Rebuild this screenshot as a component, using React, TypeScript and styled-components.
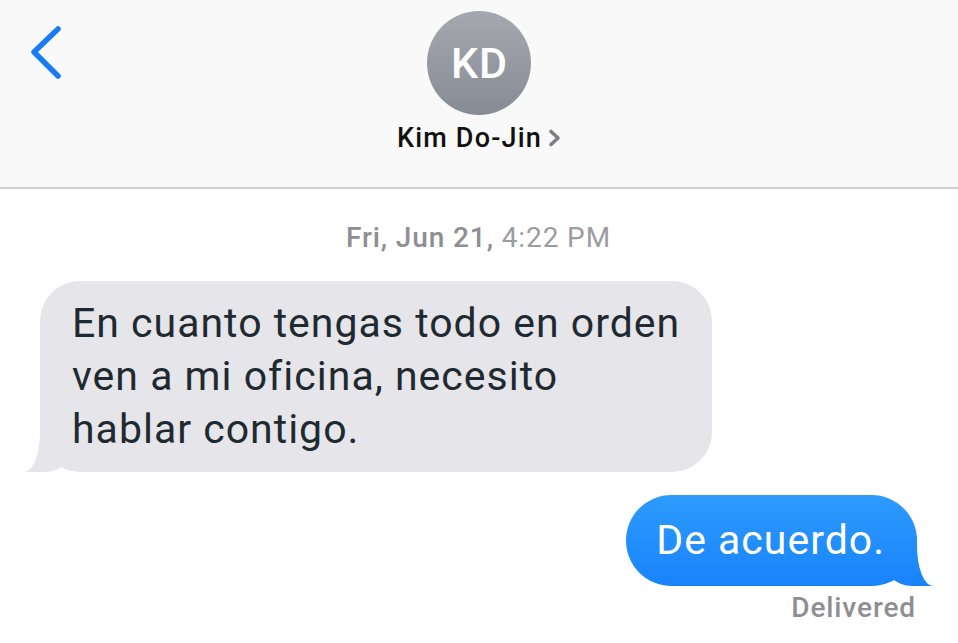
import React from "react";
import styled, { createGlobalStyle } from "styled-components";

const Global = createGlobalStyle`
  html, body { margin: 0; padding: 0; background: #ffffff; }
  body { font-family: Roboto, "Noto Sans", "Liberation Sans", sans-serif; -webkit-font-smoothing: antialiased; }
  * { box-sizing: border-box; }
`;

const Screen = styled.div`
  width: 958px;
  height: 643px;
  overflow: hidden;
  display: flex;
  flex-direction: column;
  background: #ffffff;
`;

const Header = styled.header`
  position: relative;
  height: 189px;
  flex: none;
  background: #f9f9f9;
  border-bottom: 2px solid #cfcfd1;
  display: flex;
  flex-direction: column;
  align-items: center;
  padding-top: 11px;
`;

const BackButton = styled.button`
  position: absolute;
  left: 28px;
  top: 22px;
  width: 40px;
  height: 62px;
  border: 0;
  padding: 0;
  background: transparent;
  display: flex;
  align-items: center;
  justify-content: center;
`;

const Avatar = styled.div`
  width: 104px;
  height: 104px;
  border-radius: 50%;
  background: linear-gradient(180deg, #a5a8af 0%, #878b94 100%);
  color: #ffffff;
  display: flex;
  align-items: center;
  justify-content: center;
  font-size: 43px;
  font-weight: 500;
  letter-spacing: 1px;
  padding-left: 1px;
`;

const NameRow = styled.div`
  margin-top: 6px;
  display: flex;
  align-items: center;
  gap: 6px;
  font-size: 27px;
  font-weight: 500;
  letter-spacing: 1.2px;
  color: #111111;
  line-height: 34px;
`;

const Thread = styled.main`
  flex: 1;
  display: flex;
  flex-direction: column;
  padding: 32px 41px 0 40px;
`;

const Stamp = styled.div`
  text-align: center;
  font-size: 28px;
  letter-spacing: 0.9px;
  line-height: 34px;
  color: #8e8e93;
  font-weight: 500;
  margin-bottom: 26px;
`;

const StampTime = styled.span`
  font-weight: 400;
  color: #9c9ca0;
`;

const Bubble = styled.div<{ $mine?: boolean }>`
  position: relative;
  align-self: ${(p) => (p.$mine ? "flex-end" : "flex-start")};
  width: fit-content;
  font-size: 41px;
  letter-spacing: 1px;
  line-height: 53px;
  border-radius: ${(p) => (p.$mine ? "46px" : "40px")};
  padding: ${(p) => (p.$mine ? "19px 32px 19px 30px" : "16px 32px 16px 32px")};
  color: ${(p) => (p.$mine ? "#ffffff" : "#1f2a30")};
  background: ${(p) =>
    p.$mine ? "linear-gradient(180deg, #2d9bfd 0%, #1983fb 100%)" : "#e5e5ea"};
  z-index: 0;

  &::before {
    content: "";
    position: absolute;
    z-index: -1;
    bottom: 0;
    ${(p) => (p.$mine ? "right: -15px;" : "left: -15px;")}
    width: 50px;
    height: 50px;
    background: ${(p) =>
      p.$mine ? "linear-gradient(180deg, #2490fc 0%, #1983fb 100%)" : "#e5e5ea"};
    ${(p) =>
      p.$mine
        ? "border-bottom-left-radius: 30px;"
        : "border-bottom-right-radius: 30px;"}
  }

  &::after {
    content: "";
    position: absolute;
    z-index: -1;
    bottom: 0;
    ${(p) => (p.$mine ? "right: -30px;" : "left: -30px;")}
    width: 30px;
    height: 52px;
    background: #ffffff;
    ${(p) =>
      p.$mine
        ? "border-bottom-left-radius: 16px 40px;"
        : "border-bottom-right-radius: 16px 40px;"}
  }
`;

const Gap = styled.div`
  height: 23px;
`;

const Status = styled.div`
  align-self: flex-end;
  margin-top: 5px;
  margin-right: 1px;
  font-size: 28px;
  letter-spacing: 0.9px;
  font-weight: 500;
  color: #8e8e93;
  line-height: 34px;
`;

export default function App() {
  return (
    <>
      <Global />
      <Screen>
        <Header>
          <BackButton aria-label="Back">
            <svg width="40" height="62" viewBox="0 0 40 62" fill="none">
              <path
                d="M30 7 L6 30 L30 54"
                stroke="#1a7cf5"
                strokeWidth="5.5"
                strokeLinecap="round"
                strokeLinejoin="round"
              />
            </svg>
          </BackButton>
          <Avatar>KD</Avatar>
          <NameRow>
            Kim Do-Jin
            <svg width="13" height="20" viewBox="0 0 13 20" fill="none">
              <path
                d="M3 3.5 L10 10 L3 16.5"
                stroke="#7d7d82"
                strokeWidth="3.6"
                strokeLinecap="round"
                strokeLinejoin="round"
              />
            </svg>
          </NameRow>
        </Header>
        <Thread>
          <Stamp>
            Fri, Jun 21, <StampTime>4:22 PM</StampTime>
          </Stamp>
          <Bubble>
            En cuanto tengas todo en orden
            <br />
            ven a mi oficina, necesito
            <br />
            hablar contigo.
          </Bubble>
          <Gap />
          <Bubble $mine>De acuerdo.</Bubble>
          <Status>Delivered</Status>
        </Thread>
      </Screen>
    </>
  );
}
